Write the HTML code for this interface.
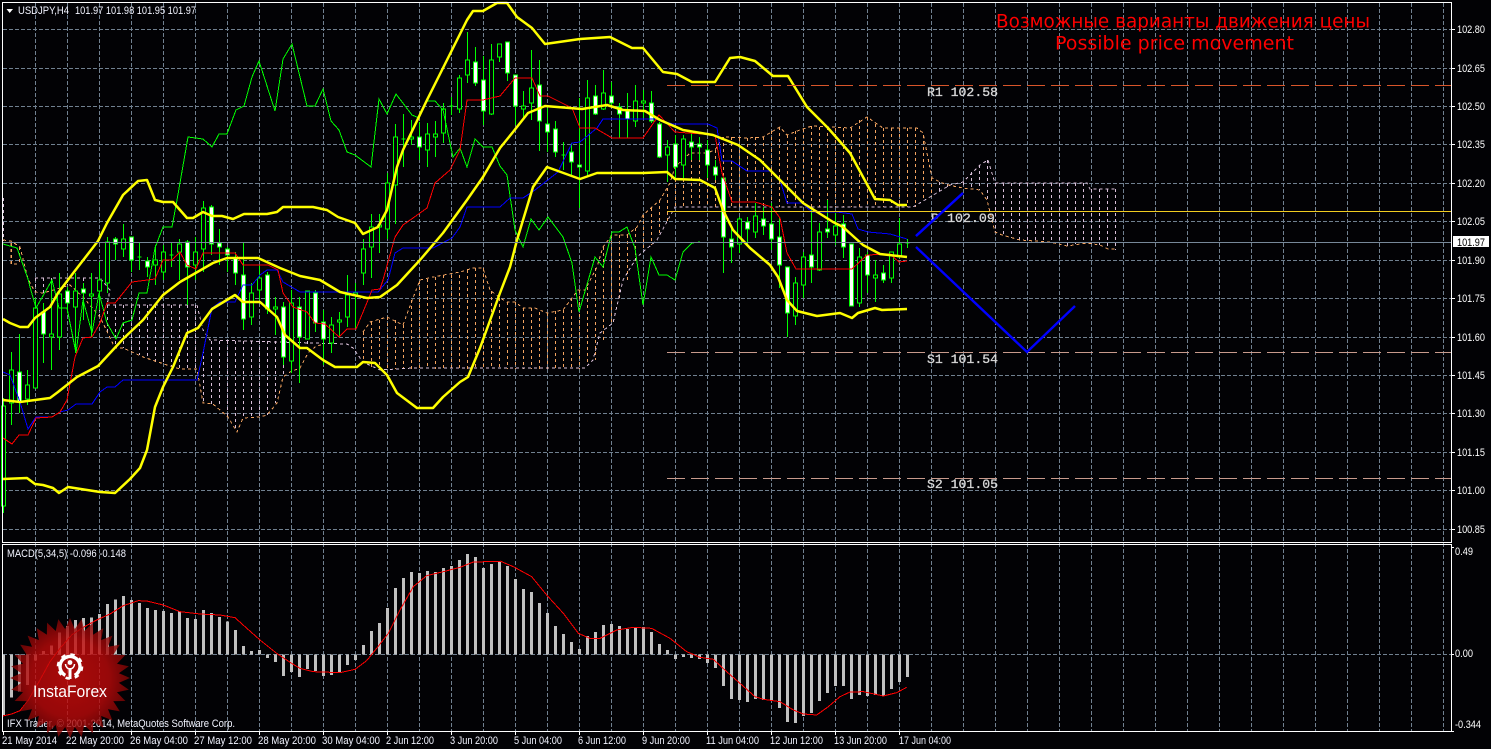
<!DOCTYPE html>
<html><head><meta charset="utf-8"><title>USDJPY,H4</title>
<style>html,body{margin:0;padding:0;background:#020205;overflow:hidden}svg{display:block}text{font-family:"Liberation Sans",sans-serif}</style>
</head><body>
<svg xmlns="http://www.w3.org/2000/svg" width="1491" height="749" viewBox="0 0 1491 749">
<defs>
<radialGradient id="rg" gradientUnits="userSpaceOnUse" cx="0" cy="0" r="60"><stop offset="0" stop-color="#d40c0c"/><stop offset=".65" stop-color="#bd0a0a"/><stop offset="1" stop-color="#7c0606"/></radialGradient>
<polygon id="d" points="0,-60 26,0 0,60 -26,0"/>
</defs>
<rect width="1491" height="749" fill="#020205"/>

<!-- grid -->
<g stroke="#708090" stroke-width="1" stroke-dasharray="4 2" fill="none" shape-rendering="crispEdges">
<path d="M3 29.5H1451M3 68.5H1451M3 106.5H1451M3 144.5H1451M3 183.5H1451M3 221.5H1451M3 260.5H1451M3 298.5H1451M3 337.5H1451M3 375.5H1451M3 413.5H1451M3 452.5H1451M3 490.5H1451M3 529.5H1451M3 654.5H1451"/>
<path d="M35.5 3V731M67.5 3V731M99.5 3V731M131.5 3V731M163.5 3V731M195.5 3V731M227.5 3V731M259.5 3V731M291.5 3V731M323.5 3V731M355.5 3V731M387.5 3V731M419.5 3V731M451.5 3V731M483.5 3V731M515.5 3V731M547.5 3V731M579.5 3V731M611.5 3V731M643.5 3V731M675.5 3V731M707.5 3V731M739.5 3V731M771.5 3V731M803.5 3V731M835.5 3V731M867.5 3V731M899.5 3V731M931.5 3V731M963.5 3V731M995.5 3V731M1027.5 3V731M1059.5 3V731M1091.5 3V731M1123.5 3V731M1155.5 3V731M1187.5 3V731M1219.5 3V731M1251.5 3V731M1283.5 3V731M1315.5 3V731M1347.5 3V731M1379.5 3V731M1411.5 3V731M1443.5 3V731"/>
</g>

<!-- cloud hatch -->
<g fill="none" stroke-width="1" stroke-dasharray="3 3" shape-rendering="crispEdges">
<path stroke="#d8bfd8" d="M3.5 198V241M35.5 278V292M43.5 278V293M51.5 278V290M59.5 278V288M67.5 278V285M75.5 278V288M83.5 278V297M91.5 278V310M99.5 278V317M107.5 305V335M115.5 305V348M123.5 305V348M131.5 305V351M139.5 305V355M147.5 305V358M155.5 305V362M163.5 305V365M171.5 305V367M179.5 305V369M187.5 305V369M195.5 305V369M203.5 350V403M211.5 341V404M219.5 341V406M227.5 341V417M235.5 341V431M243.5 341V418M251.5 341V417M259.5 341V417M267.5 341V415M275.5 341V403M283.5 341V377M291.5 341V372M299.5 341V368M307.5 341V353M939.5 182V193M947.5 184V187M963.5 182V188M971.5 172V188M979.5 165V190M987.5 160V200M995.5 183V232M1003.5 183V236M1011.5 183V238M1019.5 183V240M1027.5 183V241M1035.5 183V241M1043.5 183V242M1051.5 183V242M1059.5 183V243M1067.5 183V246M1075.5 183V244M1083.5 183V243M1091.5 189V244M1099.5 189V245M1107.5 189V249M1115.5 189V250"/>
<path stroke="#f4a460" d="M11.5 243V264M19.5 247V264M363.5 332V362M371.5 322V369M379.5 320V369M387.5 317V369M395.5 320V369M403.5 325V369M411.5 300V369M419.5 281V369M427.5 279V369M435.5 277V369M443.5 275V369M451.5 275V369M459.5 275V369M467.5 270V369M475.5 268V369M483.5 268V369M491.5 291V369M499.5 298V369M507.5 302V369M515.5 302V369M523.5 308V369M531.5 308V369M539.5 312V369M547.5 313V369M555.5 311V369M563.5 310V369M571.5 298V369M579.5 290V369M587.5 287V365M595.5 268V360M603.5 247V340M611.5 235V325M619.5 235V300M627.5 235V280M635.5 228V262M643.5 215V250M651.5 208V245M659.5 200V235M667.5 188V222M675.5 167V207M683.5 155V207M691.5 153V207M699.5 153V207M707.5 153V207M715.5 150V207M723.5 137V207M731.5 137V207M739.5 138V207M747.5 138V207M755.5 137V207M763.5 137V207M771.5 131V207M779.5 127V207M787.5 135V207M795.5 131V207M803.5 129V207M811.5 126V207M819.5 127V207M827.5 127V207M835.5 128V207M843.5 128V207M851.5 128V207M859.5 120V207M867.5 117V207M875.5 124V207M883.5 128V207M891.5 128V207M899.5 128V207M907.5 128V207M915.5 128V207M923.5 135V200M931.5 178V197"/>
<!-- senkou -->
<path stroke="#f4a460" d="M3 240L11 241L20 247L22 255L28 279L35 292L43 293L60 288L70 285L83 297L100 317L115 348L123 348L143 357L173 367L180 369L197 369L203 403L213 404L228 417L237 432L243 418L260 417L267 415L277 403L283 377L290 372L300 368L308 353L315 347L323 344M363 332L370 322L387 317L403 325L413 298L420 280L433 277L460 272L473 268L483 268L490 290L500 298L507 302L515 302L523 308L535 308L547 313L563 310L572 298L578 290L585 290L597 267L603 247L612 235L627 235L637 227L643 215L660 200L670 183L675 167L690 153L707 153L715 150L723 137L747 138L763 137L780 127L787 135L800 130L812 126L850 128L867 117L883 128L917 128L923 133L932 178L940 182L948 185L963 188L980 190L987 200L995 232L1002 235L1020 240L1050 242L1067 246L1087 243L1100 245L1108 249L1115 249M11 243V264H20"/>
<path stroke="#d8bfd8" d="M35 278H100L110 290L107 305H197L203 330L210 340L347 344L353 348L363 362L380 370L413 368H585L593 360L600 333L613 323L623 280L637 257L657 240L675 207H913L930 197L950 185L963 182L980 165L988 160L995 183H1087L1090 189H1115"/>
</g>

<!-- candles -->
<g fill="none" stroke="#00ff00" stroke-width="1" shape-rendering="crispEdges">
<path d="M3.5 398V513M11.5 352V425M19.5 334V413M27.5 370V405M35.5 298V388M43.5 303V363M51.5 280V370M59.5 273V350M67.5 287V313M75.5 273V353M83.5 283V320M91.5 273V337M99.5 262V310M107.5 237V293M115.5 237V260M123.5 224V257M131.5 237V272M139.5 242V270M147.5 257V277M155.5 245V285M163.5 245V280M171.5 242V267M179.5 239V280M187.5 240V305M195.5 237V280M203.5 201V272M211.5 205V255M219.5 229V265M227.5 247V272M235.5 252V285M243.5 243V330M251.5 283V325M259.5 265V300M267.5 272V314M275.5 297V335M283.5 302V365M291.5 290V373M299.5 297V383M307.5 291V339M315.5 290V332M323.5 310V365M331.5 317V353M339.5 312V337M347.5 275V327M355.5 283V328M363.5 239V285M371.5 214V278M379.5 214V253M387.5 173V239M395.5 124V224M403.5 114V167M411.5 120V145M419.5 122V160M427.5 123V167M435.5 121V157M443.5 103V143M451.5 97V115M459.5 75V113M467.5 32V83M475.5 47V86M483.5 56V125M491.5 44V115M499.5 44V62M507.5 42V81M515.5 75V125M523.5 91V120M531.5 50V120M539.5 60V151M547.5 108V152M555.5 121V157M563.5 142V170M571.5 143V175M579.5 98V208M587.5 80V177M595.5 85V115M603.5 70V110M611.5 82V107M619.5 103V138M627.5 93V138M635.5 85V127M643.5 90V118M651.5 91V123M659.5 122V158M667.5 140V182M675.5 135V180M683.5 135V178M691.5 133V160M699.5 137V160M707.5 140V178M715.5 160V180M723.5 178V273M731.5 227V263M739.5 217V253M747.5 217V245M755.5 203V238M763.5 207V235M771.5 203V250M779.5 217V288M787.5 267V337M795.5 277V325M803.5 252V298M811.5 210V283M819.5 223V271M827.5 200V238M835.5 213V245M843.5 215V258M851.5 244V306M859.5 248V307M867.5 252V293M875.5 260V302M883.5 265V283M891.5 252V283M899.5 218V258M907.5 239V248"/>
<path fill="#020205" d="M1.5 406h4V506h-4zM9.5 370h4V403h-4zM25.5 385h4V399h-4zM33.5 308h4V388h-4zM49.5 334h4V337h-4zM57.5 294h4V337h-4zM73.5 291h4V307h-4zM89.5 294h4V296h-4zM97.5 280h4V291h-4zM105.5 242h4V283h-4zM121.5 239h4V249h-4zM137.5 257h4M153.5 260h4V265h-4zM161.5 252h4V272h-4zM169.5 255h4M177.5 244h4V252h-4zM193.5 252h4V265h-4zM201.5 208h4V249h-4zM249.5 293h4V317h-4zM257.5 278h4V290h-4zM273.5 307h4V309h-4zM289.5 303h4V361h-4zM305.5 291h4V339h-4zM329.5 325h4V343h-4zM337.5 320h4V322h-4zM345.5 295h4V317h-4zM353.5 293h4V295h-4zM361.5 249h4V273h-4zM369.5 227h4V247h-4zM377.5 225h4V227h-4zM385.5 183h4V229h-4zM393.5 137h4V185h-4zM401.5 139h4M409.5 137h4V139h-4zM425.5 134h4V150h-4zM433.5 134h4V137h-4zM441.5 109h4V133h-4zM449.5 106h4M457.5 78h4V109h-4zM465.5 60h4V75h-4zM489.5 60h4V114h-4zM497.5 44h4V57h-4zM521.5 106h4V109h-4zM529.5 88h4V103h-4zM561.5 155h4M585.5 98h4V171h-4zM601.5 93h4V109h-4zM633.5 101h4V121h-4zM641.5 101h4V103h-4zM665.5 147h4V155h-4zM681.5 139h4V165h-4zM737.5 219h4V244h-4zM753.5 216h4V232h-4zM793.5 283h4V316h-4zM801.5 257h4V285h-4zM817.5 232h4V270h-4zM833.5 226h4V235h-4zM857.5 257h4V303h-4zM873.5 275h4V278h-4zM889.5 252h4V278h-4zM897.5 244h4V257h-4zM905.5 243h4"/>
<path fill="#fff" d="M17.5 372h4V402h-4zM41.5 312h4V334h-4zM65.5 291h4V303h-4zM81.5 289h4V293h-4zM113.5 239h4V244h-4zM129.5 237h4V260h-4zM145.5 261h4V267h-4zM185.5 242h4V267h-4zM209.5 207h4V244h-4zM217.5 243h4V247h-4zM225.5 249h4V255h-4zM233.5 258h4V273h-4zM241.5 275h4V319h-4zM265.5 275h4V309h-4zM281.5 307h4V357h-4zM297.5 307h4V337h-4zM313.5 293h4V323h-4zM321.5 322h4V339h-4zM417.5 137h4V147h-4zM473.5 62h4V83h-4zM481.5 80h4V111h-4zM505.5 42h4V73h-4zM513.5 75h4V106h-4zM537.5 85h4V121h-4zM545.5 124h4V132h-4zM553.5 129h4V152h-4zM569.5 152h4V162h-4zM577.5 165h4V167h-4zM593.5 96h4V114h-4zM609.5 96h4V103h-4zM617.5 107h4V114h-4zM625.5 111h4V119h-4zM649.5 103h4V121h-4zM657.5 124h4V157h-4zM673.5 144h4V167h-4zM689.5 142h4V147h-4zM697.5 144h4V147h-4zM705.5 150h4V165h-4zM713.5 167h4V175h-4zM721.5 178h4V237h-4zM729.5 239h4V247h-4zM745.5 222h4V229h-4zM761.5 219h4V226h-4zM769.5 224h4V239h-4zM777.5 237h4V265h-4zM785.5 267h4V313h-4zM809.5 255h4V267h-4zM825.5 229h4V232h-4zM841.5 224h4V247h-4zM849.5 244h4V306h-4zM865.5 255h4V275h-4zM881.5 273h4V280h-4z"/>
</g>

<g shape-rendering="crispEdges">
<!-- chikou -->
<polyline fill="none" stroke="#00ff00" stroke-width="1" points="3,244 17,248 28,279 30,287 36,308 52,280 59,308 67,308 76,353 83,300 92,333 99,293 107,323 116,339 123,323 132,320 139,293 147,293 155,248 163,227 172,227 177,200 188,137 203,139 212,147 219,134 227,134 236,110 244,106 252,77 259,61 275,111 283,59 292,44 307,106 315,106 323,89 331,121 339,130 347,152 355,155 371,167 379,99 387,114 396,94 412,115 419,118 427,101 435,101 443,110 453,157 460,148 467,167 475,139 483,147 492,147 500,166 507,175 515,230 523,247 531,219 539,230 548,217 563,237 572,263 579,312 595,257 603,267 612,232 619,232 627,227 635,248 643,305 651,257 659,275 667,275 675,280 683,252 692,243 700,242"/>
<!-- kijun blue -->
<polyline fill="none" stroke="#0000ff" stroke-width="1" points="3,372 10,375 20,402 28,429 36,417 52,417 60,412 68,410 76,404 92,404 100,392 107,387 115,387 123,380 197,380 203,353 212,308 220,302 235,302 243,285 252,285 260,275 267,270 277,270 283,282 300,292 378,292 388,280 395,253 403,248 433,248 452,238 460,227 467,207 500,207 510,198 523,198 535,190 558,172 572,143 580,142 597,128 603,119 655,119 673,124 708,124 717,128 722,161 732,161 747,171 772,171 780,180 787,203 802,203 812,212 837,212 852,214 858,229 868,232 890,234 907,239"/>
<!-- tenkan red -->
<polyline fill="none" stroke="#ff0000" stroke-width="1" points="3,438 12,444 19,435 28,435 36,418 52,417 60,412 67,400 75,357 83,338 92,337 100,323 107,303 115,303 132,282 155,279 163,260 172,260 180,252 187,265 196,269 203,253 235,253 243,265 268,265 278,270 283,293 293,307 307,312 315,323 325,324 339,337 347,329 356,329 368,300 372,290 380,289 383,280 395,237 403,225 413,218 427,208 435,183 450,170 460,150 467,100 483,100 500,96 515,78 532,78 540,96 548,96 572,108 580,128 595,128 612,138 643,138 659,115 675,132 715,135 722,173 732,202 755,202 772,207 780,218 787,253 796,269 852,269 867,255 890,254 899,262 907,261"/>
</g>

<!-- Bollinger -->
<g fill="none" stroke="#ffff00" stroke-width="2.5" stroke-linejoin="round">
<polyline points="3,319 10,323 20,327 28,327 35,318 50,307 58,293 74,272 98,241 107,223 123,195 138,181 147,180 155,200 163,202 173,202 187,218 193,218 203,212 212,216 222,216 233,219 244,214 267,214 277,212 283,207 313,207 327,210 338,217 355,223 363,234 378,227 387,210 397,167 403,150 427,100 467,20 473,11 483,11 497,3 507,3 517,17 532,28 545,44 580,39 610,37 632,48 643,48 663,72 677,74 692,82 715,82 730,58 740,57 755,61 773,76 788,76 807,107 828,128 850,153 875,199 890,200 898,205 907,205"/>
<polyline points="3,400 20,402 50,398 58,392 77,377 98,366 123,339 143,320 163,295 180,282 213,263 227,258 258,258 280,268 300,276 320,280 340,292 367,298 380,297 397,285 420,260 443,233 467,200 483,177 500,148 513,132 528,113 545,106 582,109 607,105 623,110 645,111 660,120 683,130 713,135 738,145 760,160 780,180 803,203 833,222 843,227 863,245 880,254 907,257"/>
<polyline points="3,479 27,478 35,484 43,485 53,488 59,493 68,487 100,492 115,493 130,479 140,468 147,450 155,407 163,387 173,367 187,333 198,328 212,309 235,295 243,302 260,302 277,317 285,335 300,348 307,348 323,360 335,367 357,367 363,362 375,363 387,375 397,393 417,408 433,408 443,397 460,382 468,377 480,348 500,293 510,267 517,240 533,187 547,167 580,179 597,173 643,173 667,172 675,179 700,180 715,188 723,210 733,230 750,248 770,265 778,277 787,300 797,311 817,316 840,313 852,318 858,313 875,308 882,310 907,309"/>
</g>

<!-- horizontal objects -->
<g fill="none" stroke-width="1" shape-rendering="crispEdges">
<path stroke="#d8552a" stroke-dasharray="18 6" d="M667 85.5H1451"/>
<path stroke="#c89a8c" stroke-dasharray="18 6" d="M667 352.5H1451M667 478.5H1451"/>
<path stroke="#f0cc20" d="M667 211.5H1451"/>
<path stroke="#778899" d="M3 242.5H1451"/>
</g>

<!-- trend lines -->
<g fill="none" stroke="#0000ff" stroke-width="2.4">
<path d="M916 236L963 193"/><path d="M916 247L1027 352L1075 306"/>
</g>

<!-- object labels -->
<g font-size="13.3" fill="#d8d8d8" stroke="#d8d8d8" stroke-width=".3">
<text x="927" y="96" style="font-family:'Liberation Mono',monospace" textLength="71" lengthAdjust="spacingAndGlyphs">R1 102.58</text>
<text x="931" y="222" style="font-family:'Liberation Mono',monospace">P 102.09</text>
<text x="927" y="363" style="font-family:'Liberation Mono',monospace" textLength="71" lengthAdjust="spacingAndGlyphs">S1 101.54</text>
<text x="927" y="488" style="font-family:'Liberation Mono',monospace" textLength="71" lengthAdjust="spacingAndGlyphs">S2 101.05</text>
</g>
<path d="M916 236L963 193" fill="none" stroke="#0000ff" stroke-width="2.4"/>

<!-- headline -->
<g fill="#ff0000" font-size="18.5">
<text x="996" y="27.5" style="font-family:'DejaVu Sans',sans-serif" textLength="374" lengthAdjust="spacingAndGlyphs">Возможные варианты движения цены</text>
<text x="1055" y="49.5" style="font-family:'DejaVu Sans',sans-serif" textLength="239" lengthAdjust="spacingAndGlyphs">Possible price movement</text>
</g>

<!-- MACD bars -->
<path transform="translate(0 540) scale(1 .33333)" fill="none" stroke="#c0c0c0" stroke-width="3" shape-rendering="crispEdges" d="M3.5 343V525M11.5 343V473M19.5 343V455M27.5 343V435M35.5 343V362M43.5 343V333M51.5 343V316M59.5 343V277M67.5 343V258M75.5 343V240M83.5 343V234M91.5 343V232M99.5 343V222M107.5 343V192M115.5 343V178M123.5 343V168M131.5 343V180M139.5 343V189M147.5 343V204M155.5 343V210M163.5 343V213M171.5 343V219M179.5 343V215M187.5 343V234M195.5 343V237M203.5 343V210M211.5 343V219M219.5 343V231M227.5 343V245M235.5 343V270M243.5 343V318M251.5 343V333M259.5 343V330M267.5 343V354M275.5 343V366M283.5 343V408M291.5 343V396M299.5 343V411M307.5 343V387M315.5 343V393M323.5 343V408M331.5 343V405M339.5 343V396M347.5 343V375M355.5 343V360M363.5 343V315M371.5 343V273M379.5 343V249M387.5 343V204M395.5 343V144M403.5 343V114M411.5 343V96M419.5 343V99M427.5 343V93M435.5 343V96M443.5 343V84M451.5 343V78M459.5 343V60M467.5 343V42M475.5 343V51M483.5 343V84M491.5 343V72M499.5 343V66M507.5 343V78M515.5 343V117M523.5 343V147M531.5 343V156M539.5 343V189M547.5 343V219M555.5 343V258M563.5 343V282M571.5 343V306M579.5 343V327M587.5 343V288M595.5 343V276M603.5 343V255M611.5 343V252M619.5 343V258M627.5 343V267M635.5 343V264M643.5 343V261M651.5 343V276M659.5 343V312M667.5 343V330M675.5 343V357M683.5 343V351M691.5 343V354M699.5 343V357M707.5 343V369M715.5 343V384M723.5 343V438M731.5 343V477M739.5 343V480M747.5 343V486M755.5 343V477M763.5 343V480M771.5 343V480M779.5 343V504M787.5 343V546M795.5 343V549M803.5 343V528M811.5 343V519M819.5 343V483M827.5 343V459M835.5 343V438M843.5 343V438M851.5 343V477M859.5 343V465M867.5 343V468M875.5 343V465M883.5 343V468M891.5 343V447M899.5 343V426M907.5 343V411"/>
<!-- MACD signal -->
<g fill="none" stroke="#ff0000" stroke-width="3" shape-rendering="crispEdges">
<polyline transform="translate(0 540) scale(.33333)" points="8,528 35,522 60,512 85,480 120,420 150,365 180,325 215,285 250,262 290,240 330,222 370,197 415,182 440,183 490,195 540,215 600,222 660,225 705,233 735,260 780,300 830,340 875,370 900,385 940,395 1020,398 1065,388 1100,362 1130,325 1165,280 1200,210 1240,140 1280,107 1330,95 1380,82 1420,66 1500,64"/>
<polyline transform="translate(500 540) scale(.33333)" points="0,63 40,80 95,110 140,165 190,220 235,280 270,295 300,295 350,270 400,262 455,265 510,295 560,335 600,352 640,358 680,395 720,430 765,470 790,478 840,485 880,510 910,522 950,525 985,500 1020,470 1050,456 1090,455 1150,468 1190,458 1220,442"/>
</g>

<!-- frames -->
<g fill="none" stroke="#ffffff" stroke-width="1" shape-rendering="crispEdges">
<path d="M2.5 2.5H1451.5V542.5H2.5Z"/>
<path d="M2.5 544.5H1451.5V731.5H2.5Z"/>
<path d="M1451 29.5h4M1451 68.5h4M1451 106.5h4M1451 144.5h4M1451 183.5h4M1451 221.5h4M1451 260.5h4M1451 298.5h4M1451 337.5h4M1451 375.5h4M1451 413.5h4M1451 452.5h4M1451 490.5h4M1451 529.5h4M1451 547.5h3M1451 654.5h3M1451 731.5h3"/>
<path d="M3.5 731v4M131.5 731v4M195.5 731v4M259.5 731v4M323.5 731v4M387.5 731v4M451.5 731v4M515.5 731v4M579.5 731v4M643.5 731v4M707.5 731v4M771.5 731v4M835.5 731v4M899.5 731v4"/>
</g>

<!-- chart labels -->
<polygon points="6.5,9 13,9 9.7,13" fill="#fff"/>
<g fill="#f2f4ff" font-size="11">
<text x="18" y="14" textLength="51" lengthAdjust="spacingAndGlyphs">USDJPY,H4</text>
<text x="75" y="14" textLength="121" lengthAdjust="spacingAndGlyphs">101.97 101.98 101.95 101.97</text>
<text x="7" y="557" textLength="119" lengthAdjust="spacingAndGlyphs">MACD(5,34,5) -0.096 -0.148</text>
<text x="7" y="727" textLength="228" lengthAdjust="spacingAndGlyphs">IFX Trader, © 2001-2014, MetaQuotes Software Corp.</text>
</g>

<!-- right axis -->
<rect x="1453" y="236" width="36" height="11" fill="#fff"/>
<g fill="#fff" font-size="11">
<text x="1457" y="33" textLength="28" lengthAdjust="spacingAndGlyphs">102.80</text>
<text x="1457" y="72" textLength="28" lengthAdjust="spacingAndGlyphs">102.65</text>
<text x="1457" y="110" textLength="28" lengthAdjust="spacingAndGlyphs">102.50</text>
<text x="1457" y="148" textLength="28" lengthAdjust="spacingAndGlyphs">102.35</text>
<text x="1457" y="187" textLength="28" lengthAdjust="spacingAndGlyphs">102.20</text>
<text x="1457" y="225" textLength="28" lengthAdjust="spacingAndGlyphs">102.05</text>
<text x="1457" y="246" textLength="28" lengthAdjust="spacingAndGlyphs" fill="#000">101.97</text>
<text x="1457" y="264" textLength="28" lengthAdjust="spacingAndGlyphs">101.90</text>
<text x="1457" y="302" textLength="28" lengthAdjust="spacingAndGlyphs">101.75</text>
<text x="1457" y="341" textLength="28" lengthAdjust="spacingAndGlyphs">101.60</text>
<text x="1457" y="379" textLength="28" lengthAdjust="spacingAndGlyphs">101.45</text>
<text x="1457" y="417" textLength="28" lengthAdjust="spacingAndGlyphs">101.30</text>
<text x="1457" y="456" textLength="28" lengthAdjust="spacingAndGlyphs">101.15</text>
<text x="1457" y="494" textLength="28" lengthAdjust="spacingAndGlyphs">101.00</text>
<text x="1457" y="533" textLength="28" lengthAdjust="spacingAndGlyphs">100.85</text>
<text x="1455" y="555" textLength="18" lengthAdjust="spacingAndGlyphs">0.49</text>
<text x="1455" y="657" textLength="18" lengthAdjust="spacingAndGlyphs">0.00</text>
<text x="1455" y="728" textLength="26" lengthAdjust="spacingAndGlyphs">-0.344</text>
</g>

<!-- time axis -->
<g fill="#f2f4ff" font-size="11">
<text x="2" y="744" textLength="55" lengthAdjust="spacingAndGlyphs">21 May 2014</text>
<text x="66" y="744" textLength="58" lengthAdjust="spacingAndGlyphs">22 May 20:00</text>
<text x="130" y="744" textLength="58" lengthAdjust="spacingAndGlyphs">26 May 04:00</text>
<text x="194" y="744" textLength="58" lengthAdjust="spacingAndGlyphs">27 May 12:00</text>
<text x="258" y="744" textLength="58" lengthAdjust="spacingAndGlyphs">28 May 20:00</text>
<text x="322" y="744" textLength="58" lengthAdjust="spacingAndGlyphs">30 May 04:00</text>
<text x="386" y="744" textLength="48" lengthAdjust="spacingAndGlyphs">2 Jun 12:00</text>
<text x="450" y="744" textLength="48" lengthAdjust="spacingAndGlyphs">3 Jun 20:00</text>
<text x="514" y="744" textLength="48" lengthAdjust="spacingAndGlyphs">5 Jun 04:00</text>
<text x="578" y="744" textLength="48" lengthAdjust="spacingAndGlyphs">6 Jun 12:00</text>
<text x="642" y="744" textLength="48" lengthAdjust="spacingAndGlyphs">9 Jun 20:00</text>
<text x="706" y="744" textLength="53" lengthAdjust="spacingAndGlyphs">11 Jun 04:00</text>
<text x="770" y="744" textLength="53" lengthAdjust="spacingAndGlyphs">12 Jun 12:00</text>
<text x="834" y="744" textLength="53" lengthAdjust="spacingAndGlyphs">13 Jun 20:00</text>
<text x="899" y="744" textLength="52" lengthAdjust="spacingAndGlyphs">17 Jun 04:00</text>
</g>

<!-- logo -->
<g transform="translate(70 678)" opacity=".8" fill="url(#rg)">
<use href="#d"/><use href="#d" transform="rotate(11.25)"/><use href="#d" transform="rotate(22.5)"/><use href="#d" transform="rotate(33.75)"/><use href="#d" transform="rotate(45)"/><use href="#d" transform="rotate(56.25)"/><use href="#d" transform="rotate(67.5)"/><use href="#d" transform="rotate(78.75)"/><use href="#d" transform="rotate(90)"/><use href="#d" transform="rotate(101.25)"/><use href="#d" transform="rotate(112.5)"/><use href="#d" transform="rotate(123.75)"/><use href="#d" transform="rotate(135)"/><use href="#d" transform="rotate(146.25)"/><use href="#d" transform="rotate(157.5)"/><use href="#d" transform="rotate(168.75)"/>
</g>
<g fill="none" stroke="#fff">
<circle cx="70" cy="666.5" r="10" stroke-width="3.4" stroke-dasharray="52.8 10.03" transform="rotate(118 70 666.5)"/>
<circle cx="70" cy="666.5" r="12" stroke-width="2.6" stroke-dasharray="4.4 5.02"/>
<path d="M65.5 664a4.5 5 0 0 0 4.5 5a4.5 5 0 0 0 4.5 -5" stroke-width="1.5"/>
<path d="M70 668V679" stroke-width="3"/>
</g>
<circle cx="70" cy="662.5" r="2.4" fill="#fff"/>
<text x="33" y="697" fill="#fff" font-size="17" textLength="74" lengthAdjust="spacingAndGlyphs">InstaForex</text>
</svg>
</body></html>
